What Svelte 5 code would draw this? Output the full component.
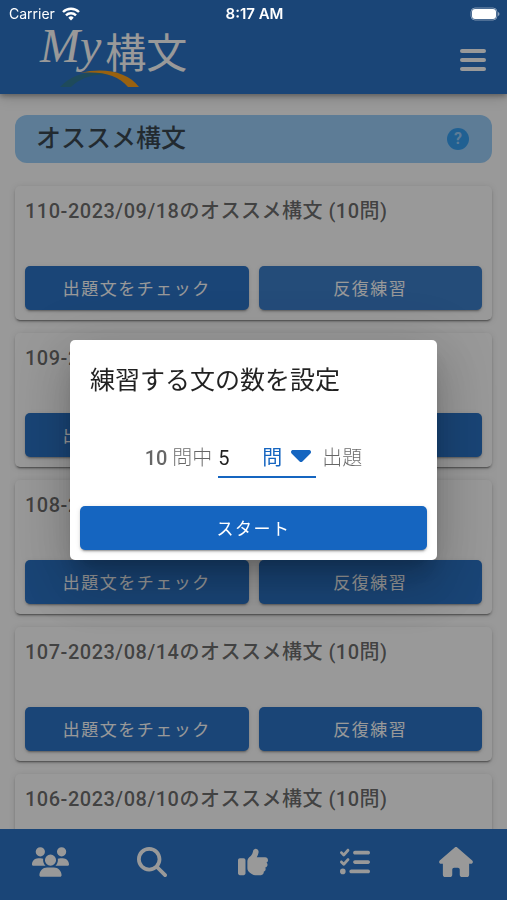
<script>
  let count = $state(5);

  const lists = [
    { id: 110, date: "2023/09/18", total: 10, active: true },
    { id: 109, date: "2023/09/04", total: 10 },
    { id: 108, date: "2023/08/21", total: 10 },
    { id: 107, date: "2023/08/14", total: 10 },
    { id: 106, date: "2023/08/10", total: 10 },
  ];

  const nav = [
    {
      label: "グループ",
      width: 37,
      box: "0 0 640 512",
      path: "M144 0a80 80 0 1 1 0 160A80 80 0 1 1 144 0zM512 0a80 80 0 1 1 0 160A80 80 0 1 1 512 0zM0 298.7C0 239.8 47.8 192 106.7 192h42.7c15.9 0 31 3.5 44.6 9.7c-1.3 7.2-1.9 14.7-1.9 22.3c0 38.2 16.8 72.5 43.3 96c-.2 0-.4 0-.7 0H21.3C9.6 320 0 310.4 0 298.7zM405.3 320c-.2 0-.4 0-.7 0c26.6-23.5 43.3-57.8 43.3-96c0-7.6-.7-15-1.9-22.3c13.6-6.3 28.7-9.7 44.6-9.7h42.7C592.2 192 640 239.8 640 298.7c0 11.8-9.6 21.3-21.3 21.3H405.3zM224 224a96 96 0 1 1 192 0 96 96 0 1 1 -192 0zM128 485.3C128 411.7 187.7 352 261.3 352H378.7C452.3 352 512 411.7 512 485.3c0 14.7-11.9 26.7-26.7 26.7H154.7c-14.7 0-26.7-11.9-26.7-26.7z",
    },
    {
      label: "検索",
      width: 30,
      box: "0 0 512 512",
      path: "M416 208c0 45.9-14.9 88.3-40 122.7L502.6 457.4c12.5 12.5 12.5 32.8 0 45.3s-32.8 12.5-45.3 0L330.7 376c-34.4 25.2-76.8 40-122.7 40C93.1 416 0 322.9 0 208S93.1 0 208 0S416 93.1 416 208zM208 352a144 144 0 1 0 0-288 144 144 0 1 0 0 288z",
    },
    {
      label: "オススメ",
      width: 30,
      box: "0 0 512 512",
      path: "M313.4 32.9c26 5.2 42.9 30.5 37.7 56.5l-2.3 11.4c-5.3 26.7-15.1 52.1-28.8 75.2H464c26.5 0 48 21.5 48 48c0 18.5-10.5 34.6-25.9 42.6C497 275.4 504 288.9 504 304c0 23.4-16.8 42.9-38.9 47.1c4.4 7.3 6.9 15.8 6.9 24.9c0 21.3-13.9 39.4-33.1 45.6c.7 3.3 1.1 6.8 1.1 10.4c0 26.5-21.5 48-48 48H294.5c-19 0-37.5-5.6-53.3-16.1l-38.5-25.7C176 420.4 160 390.4 160 358.3V320 272 247.1c0-29.2 13.3-56.7 36-75l7.4-5.9c26.5-21.2 44.6-51 51.2-84.2l2.3-11.4c5.2-26 30.5-42.9 56.5-37.7zM32 192H96c17.7 0 32 14.3 32 32V448c0 17.7-14.3 32-32 32H32c-17.7 0-32-14.3-32-32V224c0-17.7 14.3-32 32-32z",
    },
    {
      label: "リスト",
      width: 30,
      box: "0 0 512 512",
      path: "M152.1 38.2c9.9 8.9 10.7 24 1.8 33.9l-72 80c-4.4 4.9-10.6 7.8-17.2 7.9s-12.9-2.4-17.6-7L7 113C-2.3 103.6-2.3 88.4 7 79s24.6-9.4 33.9 0l22.1 22.1 55.1-61.2c8.9-9.9 24-10.7 33.9-1.8zm0 160c9.9 8.9 10.7 24 1.8 33.9l-72 80c-4.4 4.9-10.6 7.8-17.2 7.9s-12.9-2.4-17.6-7L7 273c-9.4-9.4-9.4-24.6 0-33.9s24.6-9.4 33.9 0l22.1 22.1 55.1-61.2c8.9-9.9 24-10.7 33.9-1.8zM224 96c0-17.7 14.3-32 32-32H480c17.7 0 32 14.3 32 32s-14.3 32-32 32H256c-17.7 0-32-14.3-32-32zm0 160c0-17.7 14.3-32 32-32H480c17.7 0 32 14.3 32 32s-14.3 32-32 32H256c-17.7 0-32-14.3-32-32zM160 416c0-17.7 14.3-32 32-32H480c17.7 0 32 14.3 32 32s-14.3 32-32 32H192c-17.7 0-32-14.3-32-32zM48 368a48 48 0 1 1 0 96 48 48 0 1 1 0-96z",
    },
    {
      label: "ホーム",
      width: 34,
      box: "0 0 576 512",
      path: "M575.8 255.5c0 18-15 32.1-32 32.1h-32l.7 160.2c0 2.7-.2 5.4-.5 8.1V472c0 22.1-17.9 40-40 40H456c-1.1 0-2.2 0-3.3-.1c-1.4 .1-2.8 .1-4.2 .1H416 392c-22.1 0-40-17.9-40-40V448 384c0-17.7-14.3-32-32-32H256c-17.7 0-32 14.3-32 32v64 24c0 22.1-17.9 40-40 40H160 128.1c-1.5 0-3-.1-4.5-.2c-1.2 .1-2.4 .2-3.6 .2H104c-22.1 0-40-17.9-40-40V360c0-.9 0-1.9 .1-2.8V287.6H32c-18 0-32-14-32-32.1c0-9 3-17 10-24L266.4 8c7-7 15-8 22-8s15 2 21 7L564.8 231.5c8 7 12 15 11 24z",
    },
  ];
</script>

<div class="app">
  <header>
    <div class="status">
      <div class="carrier">
        Carrier
        <svg width="18" height="14" viewBox="0 0 18 14" fill="none" stroke="#fff" stroke-width="2.4">
          <path d="M1 5a11.3 11.3 0 0 1 16 0" />
          <path d="M4 8.3a7 7 0 0 1 10 0" />
          <path d="M9 13.5l-2.7-2.8a3.8 3.8 0 0 1 5.4 0z" fill="#fff" stroke="none" />
        </svg>
      </div>
      <time>8:17 AM</time>
      <svg class="battery" width="30" height="14" viewBox="0 0 30 14">
        <rect x="1" y="1" width="26" height="12" rx="4" fill="none" stroke="#fff" stroke-opacity=".45" />
        <rect x="2" y="2" width="24" height="10" rx="3" fill="#fff" />
        <path d="M28 5v4q1.5-.7 1.5-2t-1.5-2z" fill="#fff" fill-opacity=".5" />
      </svg>
    </div>
    <div class="toolbar">
      <a class="logo" href="/" aria-label="My構文">
        <span class="logo-text"><i>My</i>構文</span>
        <svg width="80" height="18" viewBox="0 0 80 18">
          <path d="M0 17C14 2 36 0 52 5 34 3 20 8 11 17z" fill="#1d6d8c" />
          <path d="M20 3C44-3 68 2 79 17H68C58 5 42 1 20 3z" fill="#ff9800" />
        </svg>
      </a>
      <button class="menu" aria-label="メニュー">
        <svg width="26" height="24" viewBox="0 0 26 24" fill="#fff">
          <rect width="26" height="4" rx="2" y="1" />
          <rect width="26" height="4" rx="2" y="10" />
          <rect width="26" height="4" rx="2" y="19" />
        </svg>
      </button>
    </div>
  </header>

  <main>
    <div class="heading">
      <h1>オススメ構文</h1>
      <button class="help" aria-label="ヘルプ">?</button>
    </div>
    {#each lists as list (list.id)}
      <section class="card">
        <h2>{list.id}-{list.date}のオススメ構文 ({list.total}問)</h2>
        <div class="actions">
          <button class="btn">出題文をチェック</button>
          <button class="btn" class:active={list.active}>反復練習</button>
        </div>
      </section>
    {/each}
  </main>

  <nav>
    {#each nav as item}
      <a href="/" aria-label={item.label}>
        <svg width={item.width} height="30" viewBox={item.box} fill="#fff"><path d={item.path} /></svg>
      </a>
    {/each}
  </nav>
</div>

<div class="overlay">
  <div class="dialog" role="dialog" aria-labelledby="dialog-title">
    <h2 id="dialog-title">練習する文の数を設定</h2>
    <div class="setting">
      <span><b>10</b> 問中</span>
      <label class="field">
        <select bind:value={count} aria-label="問題数">
          {#each Array(10) as _, i}
            <option value={i + 1}>{i + 1}</option>
          {/each}
        </select>
        <span>問</span>
        <svg width="20" height="12" viewBox="0 192 320 192" preserveAspectRatio="xMidYMin" fill="#1565c0">
          <path d="M137.4 374.6c12.5 12.5 32.8 12.5 45.3 0l128-128c9.2-9.2 11.9-22.9 6.9-34.9s-16.6-19.8-29.6-19.8L32 192c-12.9 0-24.6 7.8-29.6 19.8s-2.2 25.7 6.9 34.9l128 128z" />
        </svg>
      </label>
      <span>出題</span>
    </div>
    <button class="btn">スタート</button>
  </div>
</div>

<style>
  :global(body) {
    margin: 0;
    background: #fff;
    font-family: Roboto, "Noto Sans CJK JP", sans-serif;
    color: rgba(0, 0, 0, 0.87);
  }
  .app {
    display: flex;
    flex-direction: column;
    height: 100vh;
  }
  button {
    border: 0;
    padding: 0;
    font-family: inherit;
    cursor: pointer;
  }
  h1,
  h2 {
    margin: 0;
    font-weight: 500;
  }
  svg {
    display: block;
  }

  header {
    position: relative;
    background: #1565c0;
    box-shadow: 0 2px 5px rgba(0, 0, 0, 0.35), 0 5px 12px rgba(0, 0, 0, 0.15);
  }
  /* the system bar stays bright above the overlay */
  .status {
    position: relative;
    z-index: 10;
    display: grid;
    grid-template-columns: 1fr auto 1fr;
    align-items: center;
    height: 28px;
    padding: 0 7px 0 9px;
    color: #fff;
    font: 14px/28px Inter, sans-serif;
  }
  .carrier {
    display: flex;
    align-items: center;
    gap: 7px;
  }
  time {
    font-size: 15px;
    font-weight: 600;
  }
  .battery {
    justify-self: end;
  }
  .toolbar {
    display: flex;
    align-items: center;
    justify-content: space-between;
    height: 64px;
    padding: 0 21px 2px 40px;
  }
  .logo {
    display: flex;
    flex-direction: column;
    gap: 2px;
    color: #fff;
    text-decoration: none;
  }
  .logo-text {
    display: flex;
    align-items: flex-start;
    gap: 4px;
    height: 36px;
    font: 400 41px/36px "Noto Sans CJK JP", sans-serif;
  }
  .logo-text i {
    font-family: "Liberation Serif", serif;
    font-size: 48px;
    line-height: 28px;
  }
  .logo svg {
    margin-left: 20px;
  }
  .menu {
    background: none;
  }

  main {
    flex: 1;
    min-height: 0;
    overflow: hidden;
    padding: 21px 15px 0;
  }
  .heading {
    display: flex;
    align-items: center;
    justify-content: space-between;
    height: 48px;
    margin-bottom: 23px;
    padding: 0 23px 0 21px;
    border-radius: 12px;
    background: #90caf9;
  }
  h1 {
    color: rgba(0, 0, 0, 0.75);
    font-size: 25px;
    line-height: 38px;
  }
  .help {
    width: 22px;
    height: 22px;
    border-radius: 50%;
    background: #2196f3;
    color: #90caf9;
    font-size: 16px;
    font-weight: 700;
    line-height: 22px;
  }
  .card {
    margin-bottom: 13px;
    padding: 10px;
    border-radius: 5px;
    box-shadow: 0 3px 1px -2px rgba(0, 0, 0, 0.3), 0 2px 2px rgba(0, 0, 0, 0.2), 0 1px 6px rgba(0, 0, 0, 0.15);
  }
  .card h2 {
    margin-bottom: 40px;
    color: rgba(0, 0, 0, 0.65);
    font-size: 20px;
    line-height: 30px;
    letter-spacing: 0.025em;
  }
  .actions {
    display: grid;
    grid-template-columns: 1fr 1fr;
    gap: 10px;
  }
  .btn {
    height: 44px;
    padding-bottom: 2px;
    border-radius: 5px;
    background: #1565c0;
    box-shadow: 0 3px 1px -2px rgba(0, 0, 0, 0.2), 0 2px 2px rgba(0, 0, 0, 0.14), 0 1px 5px rgba(0, 0, 0, 0.12);
    color: #fff;
    font-size: 17px;
    font-weight: 400;
    letter-spacing: 0.09em;
  }
  .active {
    background: #2871c5;
  }

  nav {
    position: relative;
    display: grid;
    grid-template-columns: repeat(5, 1fr);
    height: 53px;
    padding-top: 18px;
    background: #1565c0;
  }
  nav a {
    display: flex;
    justify-content: center;
  }

  .overlay {
    position: fixed;
    inset: 0;
    z-index: 5;
    display: flex;
    align-items: center;
    justify-content: center;
    background: rgba(33, 33, 33, 0.46);
  }
  .dialog {
    display: flex;
    flex-direction: column;
    box-sizing: border-box;
    width: calc(100% - 140px);
    max-width: 600px;
    padding: 22px 10px 10px;
    border-radius: 5px;
    background: #fff;
    box-shadow: 0 13px 18px -8px rgba(0, 0, 0, 0.2), 0 29px 46px 4px rgba(0, 0, 0, 0.14), 0 11px 56px 10px rgba(0, 0, 0, 0.12);
  }
  .dialog h2 {
    padding: 0 10px;
    font-size: 25px;
    font-weight: 400;
    line-height: 38px;
  }
  .setting {
    display: flex;
    justify-content: center;
    gap: 6px;
    margin: 40px 0 28px;
    color: rgba(0, 0, 0, 0.6);
    font-size: 20px;
    font-weight: 300;
    line-height: 36px;
  }
  .setting b {
    font-weight: 500;
  }
  .field {
    display: flex;
    align-items: center;
    height: 36px;
    border-bottom: 2px solid #1565c0;
    color: #1565c0;
    font-weight: 400;
  }
  .field svg {
    margin: 0 5px 4px 9px;
  }
  select {
    width: 44px;
    height: 36px;
    padding: 0;
    border: 0;
    appearance: none;
    background: none;
    color: rgba(0, 0, 0, 0.87);
    font: 400 20px Roboto, sans-serif;
    outline: none;
  }
</style>
